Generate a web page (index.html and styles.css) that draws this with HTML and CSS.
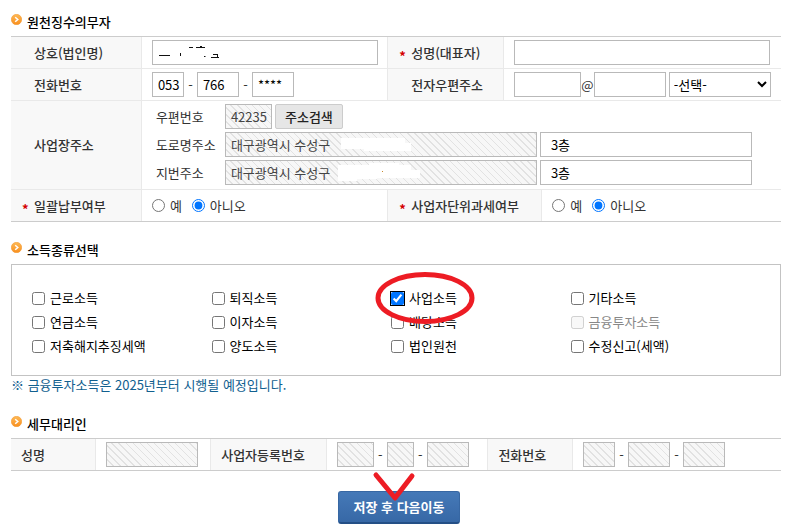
FILE: index.html
```html
<!DOCTYPE html>
<html lang="ko">
<head>
    <meta charset="UTF-8">
    <title>원천징수의무자</title>
    <link rel="stylesheet" href="styles.css">
</head>
<body>
    <svg width="0" height="0" class="defs">
        <defs>
            <linearGradient id="orange" x1="0" y1="0" x2="0" y2="1">
                <stop offset="0" stop-color="#fdb955"/>
                <stop offset="1" stop-color="#f98f1f"/>
            </linearGradient>
            <symbol id="bullet" viewBox="0 0 11 11">
                <circle cx="5.5" cy="5.5" r="5.2" fill="url(#orange)" stroke="#f39a33" stroke-width="0.6"/>
                <path d="M4.2 3.2 L6.8 5.5 L4.2 7.8" fill="none" stroke="#fff" stroke-width="1.5"/>
            </symbol>
        </defs>
    </svg>

    <form>
        <section class="section">
            <h2 class="title"><svg class="bullet"><use href="#bullet"/></svg>원천징수의무자</h2>
            <table class="form-table">
                <colgroup>
                    <col class="w17"><col class="w32"><col class="w15"><col class="w5"><col class="w31">
                </colgroup>
                <tr>
                    <th><label for="company">상호(법인명)</label></th>
                    <td>
                        <div class="field">
                            <input type="text" id="company" class="input w-company">
                            <svg class="erased" width="70" height="19" viewBox="0 0 70 19">
                                <path d="M1 12.5h11 M22.5 10v3 M31 4.5h4 M38 4.5h9 M42 3.5h2 M46 13.5h1.5 M53 14.5h8 M59.5 11v3 M55 11.5h5" stroke="#111" fill="none"/>
                            </svg>
                        </div>
                    </td>
                    <th class="required"><span class="star">*</span><label for="ceo">성명(대표자)</label></th>
                    <td colspan="2"><div class="field"><input type="text" id="ceo" class="input w-ceo"></div></td>
                </tr>
                <tr>
                    <th><label for="tel1">전화번호</label></th>
                    <td>
                        <div class="field">
                            <input type="text" id="tel1" class="input w-tel1" value="053">
                            <span class="dash">-</span>
                            <input type="text" class="input w-tel2" value="766" aria-label="국번">
                            <span class="dash">-</span>
                            <input type="text" class="input w-tel2" value="****" aria-label="번호">
                        </div>
                    </td>
                    <th><label for="email">전자우편주소</label></th>
                    <td colspan="2">
                        <div class="field">
                            <input type="text" id="email" class="input w-email">
                            <span class="at">@</span>
                            <input type="text" class="input w-domain" aria-label="도메인">
                            <select class="select" aria-label="도메인 선택">
                                <option>-선택-</option>
                            </select>
                        </div>
                    </td>
                </tr>
                <tr>
                    <th>사업장주소</th>
                    <td colspan="4" class="address">
                        <div class="field">
                            <label for="zip">우편번호</label>
                            <input type="text" id="zip" class="input off w-zip" value="42235" readonly>
                            <button type="button" class="btn-search">주소검색</button>
                        </div>
                        <div class="field">
                            <label for="road">도로명주소</label>
                            <div class="masked">
                                <input type="text" id="road" class="input off w-address" value="대구광역시 수성구" readonly>
                                <svg class="mask" width="90" height="21" viewBox="0 0 90 21">
                                    <path d="M4 4H68V9H74V17H27V15H4Z" fill="#fff"/>
                                </svg>
                            </div>
                            <input type="text" class="input detail" value="3층" aria-label="상세주소">
                        </div>
                        <div class="field">
                            <label for="jibun">지번주소</label>
                            <div class="masked">
                                <input type="text" id="jibun" class="input off w-address" value="대구광역시 수성구" readonly>
                                <svg class="mask" width="90" height="21" viewBox="0 0 90 21">
                                    <path d="M1 3H32V1H62V3H74V8H83V16H40V17H20V19H1Z" fill="#fff"/>
                                    <path d="M45 9h1v1h-1z" fill="#c98a2b"/>
                                </svg>
                            </div>
                            <input type="text" class="input detail" value="3층" aria-label="상세주소">
                        </div>
                    </td>
                </tr>
                <tr>
                    <th class="required"><span class="star">*</span>일괄납부여부</th>
                    <td>
                        <div class="field radios">
                            <label><input type="radio" name="batch">예</label>
                            <label><input type="radio" name="batch" checked>아니오</label>
                        </div>
                    </td>
                    <th class="required" colspan="2"><span class="star">*</span>사업자단위과세여부</th>
                    <td>
                        <div class="field radios">
                            <label><input type="radio" name="unit">예</label>
                            <label><input type="radio" name="unit" checked>아니오</label>
                        </div>
                    </td>
                </tr>
            </table>
        </section>

        <section class="section">
            <h2 class="title"><svg class="bullet"><use href="#bullet"/></svg>소득종류선택</h2>
            <div class="income">
                <label><input type="checkbox">근로소득</label>
                <label><input type="checkbox">퇴직소득</label>
                <label class="picked">
                    <input type="checkbox" checked>사업소득
                    <svg class="circle-mark" width="100" height="54" viewBox="0 0 100 54">
                        <ellipse cx="50" cy="27" rx="47" ry="23.5" fill="none" stroke="#ed1c24" stroke-width="5"/>
                    </svg>
                </label>
                <label><input type="checkbox">기타소득</label>
                <label><input type="checkbox">연금소득</label>
                <label><input type="checkbox">이자소득</label>
                <label><input type="checkbox">배당소득</label>
                <label class="disabled"><input type="checkbox" disabled>금융투자소득</label>
                <label><input type="checkbox">저축해지추징세액</label>
                <label><input type="checkbox">양도소득</label>
                <label><input type="checkbox">법인원천</label>
                <label><input type="checkbox">수정신고(세액)</label>
            </div>
            <p class="note">※ 금융투자소득은 2025년부터 시행될 예정입니다.</p>
        </section>

        <section class="section">
            <h2 class="title"><svg class="bullet"><use href="#bullet"/></svg>세무대리인</h2>
            <table class="form-table agent">
                <colgroup>
                    <col class="w11"><col class="w15"><col class="w15"><col class="w21"><col class="w11"><col class="w27">
                </colgroup>
                <tr>
                    <th><label for="agent">성명</label></th>
                    <td><div class="field"><input type="text" id="agent" class="input off w-agent" readonly></div></td>
                    <th><label for="biz">사업자등록번호</label></th>
                    <td>
                        <div class="field">
                            <input type="text" id="biz" class="input off w-biz1" readonly>
                            <span class="dash">-</span>
                            <input type="text" class="input off w-biz2" aria-label="등록번호 가운데" readonly>
                            <span class="dash">-</span>
                            <input type="text" class="input off w-tel2" aria-label="등록번호 끝" readonly>
                        </div>
                    </td>
                    <th><label for="agentTel">전화번호</label></th>
                    <td>
                        <div class="field">
                            <input type="text" id="agentTel" class="input off w-tel1" readonly>
                            <span class="dash">-</span>
                            <input type="text" class="input off w-tel2" aria-label="국번" readonly>
                            <span class="dash">-</span>
                            <input type="text" class="input off w-tel2" aria-label="번호" readonly>
                        </div>
                    </td>
                </tr>
            </table>
        </section>

        <div class="actions">
            <button type="button" class="btn-save">
                저장 후 다음이동
                <svg class="check-mark" width="46" height="32" viewBox="0 0 46 32">
                    <path d="M4 4 L23 27 L40 5" fill="none" stroke="#ed1c24" stroke-width="5" stroke-linecap="round" stroke-linejoin="round"/>
                </svg>
            </button>
        </div>
    </form>
</body>
</html>
```

FILE: styles.css
```css
* {
    box-sizing: border-box;
}

body {
    margin: 0;
    background-color: #fff;
    color: #333;
}

body,
input,
select,
button {
    font-family: "Noto Sans CJK KR", sans-serif;
    font-size: 13px;
    line-height: 18px;
}

.defs {
    position: absolute;
}

.section {
    margin: 0 17px 0 11px;
    padding-top: 13px;
}

.section + .section {
    padding-top: 19px;
}

.title {
    display: flex;
    align-items: flex-start;
    gap: 5px;
    margin: 0 0 5px;
    color: #000;
    font-size: 13px;
    font-weight: 500;
    line-height: 18px;
}

.bullet {
    width: 11px;
    height: 11px;
    margin-top: 1px;
}

/* tables */
.form-table {
    width: 100%;
    table-layout: fixed;
    border-spacing: 0;
    border-top: 1px solid #ccc;
    border-bottom: 1px solid #ccc;
}

.form-table th,
.form-table td {
    padding: 3px 0 3px 10px;
    border-right: 1px solid #e9e9e9;
    text-align: left;
}

.form-table td:last-child {
    border-right: none;
}

.form-table tr:not(:last-child) > * {
    border-bottom: 1px solid #e9e9e9;
}

.form-table th {
    padding-left: 23px;
    background-color: #f8f8f8;
    font-weight: 500;
}

.form-table th.required {
    padding-left: 11px;
}

.form-table.agent th {
    padding-left: 10px;
}

.form-table td.address {
    padding-bottom: 4px;
}

.w5 { width: 5%; }
.w11 { width: 11%; }
.w15 { width: 15%; }
.w17 { width: 17%; }
.w21 { width: 21%; }
.w27 { width: 27%; }
.w31 { width: 31%; }
.w32 { width: 32%; }

.star {
    display: inline-block;
    width: 12px;
    color: #d40000;
    font-weight: 700;
    line-height: 12px;
    vertical-align: -3px;
}

/* fields */
.field {
    position: relative;
    display: flex;
    align-items: center;
    min-height: 25px;
}

.input {
    height: 25px;
    padding: 0 0 0 5px;
    border: 1px solid #b9b9b9;
    background-color: #fff;
    color: #000;
}

.input.off {
    background: repeating-linear-gradient(45deg, #f7f7f7 0, #f7f7f7 4px, #e2e2e2 4px, #e2e2e2 5px);
    color: #444;
}

.w-company { width: 226px; }
.w-ceo { width: 256px; }
.w-tel1 { width: 32px; }
.w-tel2 { width: 42px; }
.w-email { width: 67px; }
.w-domain { width: 72px; }
.w-zip { width: 47px; }
.w-address { width: 312px; }
.w-agent { width: 92px; }
.w-biz1 { width: 37px; }
.w-biz2 { width: 27px; }

.dash,
.at {
    width: 13px;
    text-align: center;
}

.select {
    width: 102px;
    height: 25px;
    margin-left: 3px;
    padding: 0;
    border: 1px solid #b9b9b9;
    background-color: #fff;
    color: #000;
}

.address .field + .field {
    margin-top: 3px;
}

.address label {
    width: 73px;
    padding-left: 4px;
}

.btn-search {
    width: 68px;
    height: 25px;
    margin-left: 3px;
    padding: 0;
    border: 1px solid #ccc;
    border-radius: 2px;
    background-color: #e6e6e6;
    color: #222;
    font-weight: 500;
}

.detail {
    width: 212px;
    margin-left: 3px;
    padding-left: 10px;
}

.masked {
    position: relative;
    display: flex;
}

.mask {
    position: absolute;
    top: 2px;
    left: 112px;
}

.erased {
    position: absolute;
    top: 3px;
    left: 6px;
}

.radios {
    gap: 10px;
}

.radios label {
    display: flex;
    align-items: center;
    gap: 5px;
}

.radios input,
.income input {
    width: 13px;
    height: 13px;
    margin: 0;
}

/* income types */
.income {
    display: grid;
    grid-template-columns: repeat(4, 1fr);
    padding: 21px 30px 17px 20px;
    border: 1px solid #c3c3c3;
    color: #000;
}

.income label {
    display: flex;
    align-items: center;
    gap: 5px;
    height: 24px;
}

.income .disabled {
    color: #888;
}

.income .picked {
    position: relative;
}

.picked input {
    outline: 1px solid #000;
}

.circle-mark {
    position: absolute;
    top: -15px;
    left: -16px;
}

.note {
    margin: 0 0 2px;
    color: #11608f;
}

/* buttons */
.actions {
    padding-top: 20px;
    text-align: center;
}

.btn-save {
    position: relative;
    width: 122px;
    height: 33px;
    padding: 0;
    border: 1px solid #3767a3;
    border-bottom: 2px solid #244f86;
    border-radius: 3px;
    background: linear-gradient(#4579b8, #3768a6);
    color: #fff;
    font-weight: 700;
}

.check-mark {
    position: absolute;
    top: -21px;
    left: 33px;
}
```
